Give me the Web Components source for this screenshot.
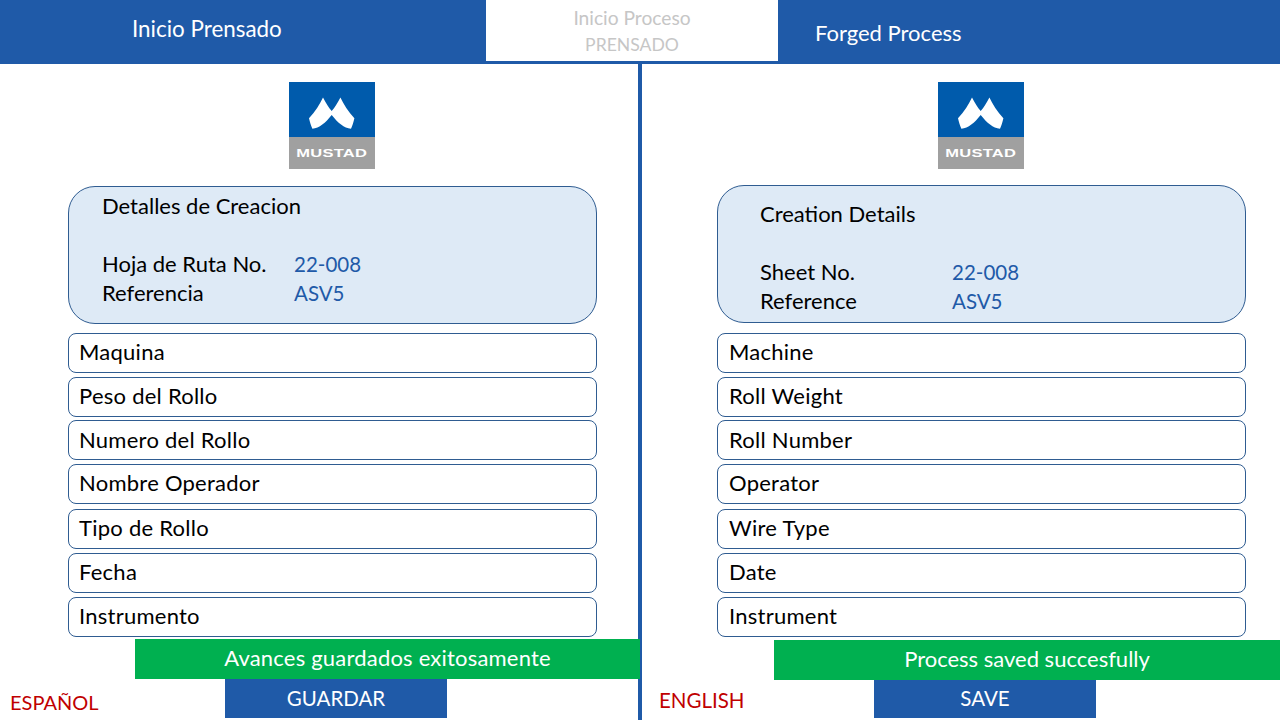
<!DOCTYPE html>
<html lang="es">
<head>
<meta charset="utf-8">
<title>Inicio Prensado</title>
<style>
  html, body { margin: 0; height: 100%; background: #fff; }
  body { font-family: Lato, "Open Sans", sans-serif; overflow: hidden; }
</style>
</head>
<body>
<process-screen>
  <app-header slot="header">
    <span slot="left" style="font-size:22.4px">Inicio Prensado</span>
    <span slot="tab"><span style="font-size:19.2px">Inicio Proceso</span><br>PRENSADO</span>
    <span slot="right">Forged Process</span>
  </app-header>

  <lang-panel slot="left" lang-name="ESPAÑOL" action="GUARDAR" message="Avances guardados exitosamente"
    style="--inset:68px; --logo-left:289px; --card-gap:17px; --fields-gap:9px; --status-gap:2px; --status-left:135px; --status-over:-2px; --status-ls:.2px;
           --lang-col:225px; --lang-pad:10px; --lang-top:6px; --lang-size:20px; --action-h:39px; --card-top:4px">
    <details-card title-text="Detalles de Creacion">
      <detail-row label="Hoja de Ruta No." value="22-008"></detail-row>
      <detail-row label="Referencia" value="ASV5"></detail-row>
    </details-card>
    <field-row slot="fields">Maquina</field-row>
    <field-row slot="fields">Peso del Rollo</field-row>
    <field-row slot="fields" style="margin-top:-1px; padding-bottom:1px">Numero del Rollo</field-row>
    <field-row slot="fields">Nombre Operador</field-row>
    <field-row slot="fields" style="margin-top:1px">Tipo de Rollo</field-row>
    <field-row slot="fields">Fecha</field-row>
    <field-row slot="fields">Instrumento</field-row>
  </lang-panel>

  <lang-panel slot="right" lang-name="ENGLISH" action="SAVE" message="Process saved succesfully"
    style="--inset:75px; --logo-left:296px; --card-gap:16px; --fields-gap:10px; --status-gap:3px; --status-left:132px; --status-over:0px; --status-ls:0px;
           --lang-col:232px; --lang-pad:17px; --lang-top:2px; --lang-size:20.5px; --action-h:38px; --card-top:13px">
    <details-card title-text="Creation Details" style="--title-pad:42px">
      <detail-row label="Sheet No." value="22-008"></detail-row>
      <detail-row label="Reference" value="ASV5"></detail-row>
    </details-card>
    <field-row slot="fields" style="--field-pad:11px">Machine</field-row>
    <field-row slot="fields" style="--field-pad:11px">Roll Weight</field-row>
    <field-row slot="fields" style="--field-pad:11px; margin-top:-1px; padding-bottom:1px">Roll Number</field-row>
    <field-row slot="fields" style="--field-pad:11px">Operator</field-row>
    <field-row slot="fields" style="--field-pad:11px; margin-top:1px">Wire Type</field-row>
    <field-row slot="fields" style="--field-pad:11px">Date</field-row>
    <field-row slot="fields" style="--field-pad:11px">Instrument</field-row>
  </lang-panel>
</process-screen>

<script>
const BLUE = "#1f5aa8";

// helper: shadow root from a string
class Base extends HTMLElement {
  constructor() {
    super();
    this.attachShadow({ mode: "open" });
    this.shadowRoot.innerHTML = this.constructor.html(this);
  }
  static html() { return ""; }
}

class ProcessScreen extends Base {
  static html() {
    return `
      <style>
        :host { display: grid; grid-template-rows: 64px 656px; width: 1280px; height: 720px; }
        .panels { display: grid; grid-template-columns: 638px 4px 638px; }
        .divider { background: ${BLUE}; }
      </style>
      <slot name="header"></slot>
      <div class="panels">
        <slot name="left"></slot>
        <div class="divider"></div>
        <slot name="right"></slot>
      </div>`;
  }
}

class AppHeader extends Base {
  static html() {
    return `
      <style>
        :host {
          display: grid;
          grid-template-columns: 486px 292px 502px;
          height: 64px;
          background: ${BLUE};
          color: #fff;
          font-size: 22px;
        }
        .left  { padding: 15px 0 0 132px; line-height: 27px; }
        .right { padding: 19px 0 0 37px; line-height: 27px; }
        .tab {
          height: 61px;
          background: #fff;
          color: #c6c6c6;
          font-size: 17.6px;
          line-height: 26px;
          text-align: center;
          padding-top: 5px;
          box-sizing: border-box;
        }
      </style>
      <div class="left"><slot name="left"></slot></div>
      <div class="tab"><slot name="tab"></slot></div>
      <div class="right"><slot name="right"></slot></div>`;
  }
}

class MustadLogo extends Base {
  static html() {
    return `
      <style>
        :host { display: block; width: 86px; height: 87px; position: relative; font-family: "Liberation Sans", sans-serif; }
        svg { display: block; }
        .name {
          position: absolute; left: 0; right: 0; top: 55px; height: 32px;
          display: flex; align-items: center; justify-content: center;
          color: #fff; font-size: 11px; font-weight: 700; letter-spacing: .2px;
        }
        .name span { display: inline-block; transform: scaleX(1.5); }
      </style>
      <svg width="86" height="87" viewBox="0 0 86 87">
        <rect width="86" height="55" fill="#005bac"/>
        <rect y="55" width="86" height="32" fill="#a0a0a0"/>
        <path fill="#fff" d="M34 15.5C37 21 39.5 25.5 42.7 29C45.9 25.5 48.4 21 51.4 15.5C54.4 22 59.4 30 65.4 36.3C64.5 40 63.5 43.5 62 46.7C55 46 49 41 42.7 33C36.4 41 30.4 46 23.4 46.7C21.9 43.5 20.9 40 20 36.3C26 30 31 22 34 15.5Z"/>
      </svg>
      <div class="name"><span>MUSTAD</span></div>`;
  }
}

class DetailsCard extends Base {
  static html(el) {
    return `
      <style>
        :host {
          display: block;
          height: 138px;
          box-sizing: border-box;
          background: #deeaf6;
          border: 1px solid #2f5c91;
          border-radius: 27px;
          padding: var(--card-top, 5px) 0 0 var(--title-pad, 33px);
          color: #000;
          font-size: 22px;
          line-height: 29px;
        }
        .title { height: 58px; }
      </style>
      <div class="title">${el.getAttribute("title-text")}</div>
      <slot></slot>`;
  }
}

class DetailRow extends Base {
  static html(el) {
    return `
      <style>
        :host { display: grid; grid-template-columns: 192px 1fr; height: 29px; }
        .value { color: ${BLUE}; font-size: 20.5px; line-height: 31px; }
      </style>
      <div>${el.getAttribute("label")}</div>
      <div class="value">${el.getAttribute("value")}</div>`;
  }
}

class FieldRow extends Base {
  static html() {
    return `
      <style>
        :host {
          display: flex;
          align-items: center;
          height: 40px;
          box-sizing: border-box;
          border: 1px solid #2f5c91;
          border-radius: 8px;
          padding: 0 0 3px var(--field-pad, 10px);
          background: #fff;
          color: #000;
          font-size: 22px;
          letter-spacing: .25px;
        }
      </style>
      <slot></slot>`;
  }
}

class LangPanel extends Base {
  static html(el) {
    const attr = (n) => el.getAttribute(n);
    return `
      <style>
        :host { display: block; height: 656px; }
        .logo { padding: 18px 0 0 var(--logo-left); }
        .body { padding: 0 calc(638px - var(--inset) - 529px) 0 var(--inset); }
        .card { margin-top: var(--card-gap); }
        .fields { margin-top: var(--fields-gap); display: flex; flex-direction: column; gap: 4px; }
        .status {
          position: relative;
          margin: var(--status-gap) var(--status-over) 0 var(--status-left);
          height: 40px;
          box-sizing: border-box;
          padding-bottom: 3px;
          background: #00b050;
          color: #fff;
          font-size: 22px;
          letter-spacing: var(--status-ls);
          display: flex; align-items: center; justify-content: center;
        }
        .foot {
          display: grid;
          grid-template-columns: var(--lang-col) 222px;
          height: var(--action-h);
        }
        .lang { padding: var(--lang-top) 0 0 var(--lang-pad); color: #c00000; font-size: var(--lang-size); display: flex; align-items: center; }
        .action { padding-bottom: 2px; background: ${BLUE}; color: #fff; font-size: 20.5px; display: flex; align-items: center; justify-content: center; }
      </style>
      <div class="logo"><mustad-logo></mustad-logo></div>
      <div class="body">
        <div class="card"><slot></slot></div>
        <div class="fields"><slot name="fields"></slot></div>
      </div>
      <div class="status">${attr("message")}</div>
      <div class="foot">
        <div class="lang">${attr("lang-name")}</div>
        <div class="action">${attr("action")}</div>
      </div>`;
  }
}

customElements.define("mustad-logo", MustadLogo);
customElements.define("detail-row", DetailRow);
customElements.define("details-card", DetailsCard);
customElements.define("field-row", FieldRow);
customElements.define("app-header", AppHeader);
customElements.define("lang-panel", LangPanel);
customElements.define("process-screen", ProcessScreen);
</script>
</body>
</html>
